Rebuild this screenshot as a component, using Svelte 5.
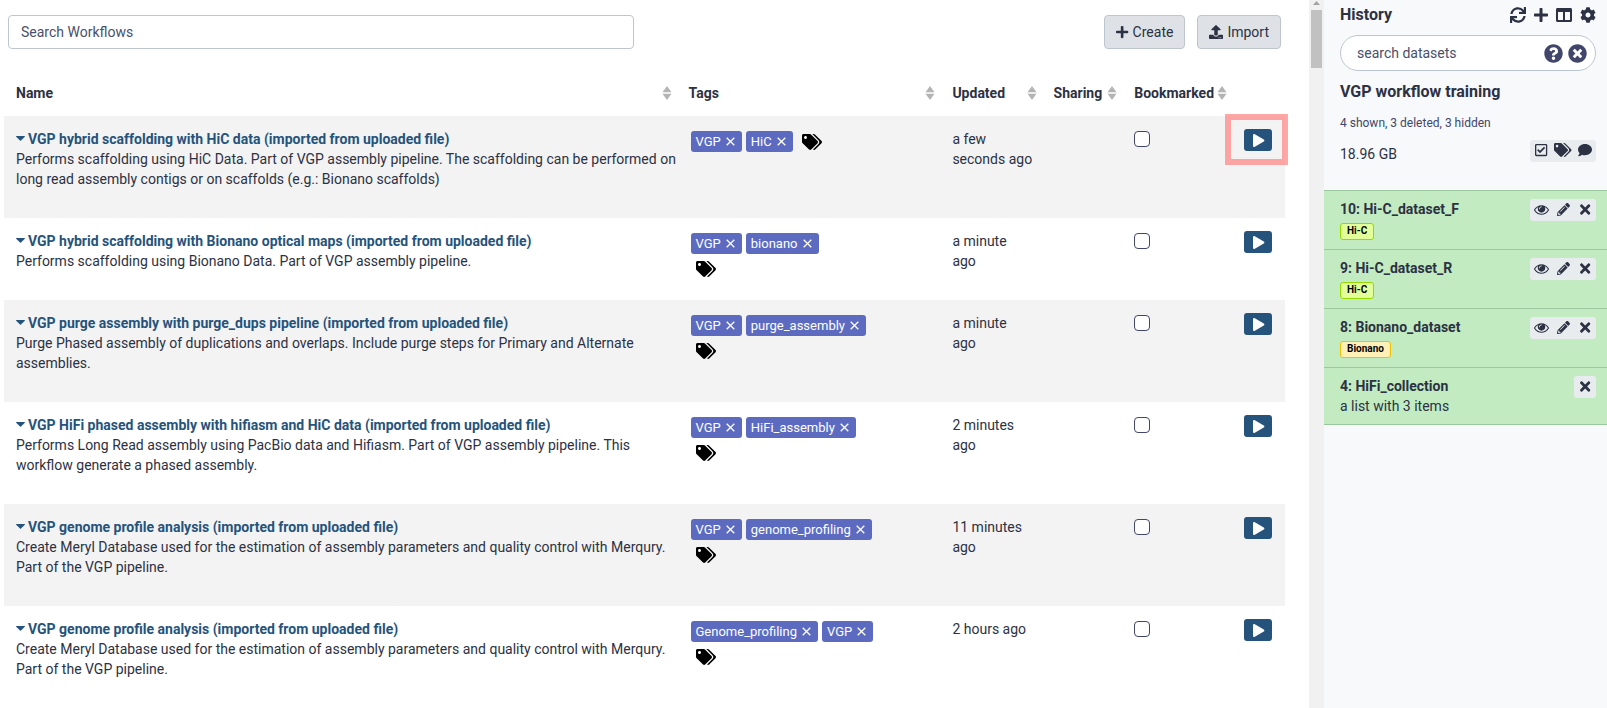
<script>
  const icons = {
    plus: [448, 512, 'M416 208H272V64c0-17.67-14.33-32-32-32h-32c-17.67 0-32 14.33-32 32v144H32c-17.67 0-32 14.33-32 32v32c0 17.67 14.33 32 32 32h144v144c0 17.67 14.33 32 32 32h32c17.67 0 32-14.33 32-32V304h144c17.67 0 32-14.33 32-32v-32c0-17.67-14.33-32-32-32z'],
    upload: [512, 512, 'M296 384h-80c-13.3 0-24-10.7-24-24V192h-87.7c-17.8 0-26.7-21.5-14.1-34.1L242.3 5.7c7.5-7.5 19.8-7.5 27.3 0l152.2 152.2c12.6 12.6 3.7 34.1-14.1 34.1H320v168c0 13.3-10.7 24-24 24zm216-8v112c0 13.3-10.7 24-24 24H24c-13.3 0-24-10.7-24-24V376c0-13.3 10.7-24 24-24h136v8c0 30.9 25.1 56 56 56h80c30.9 0 56-25.1 56-56v-8h136c13.3 0 24 10.7 24 24zm-124 88c0-11-9-20-20-20s-20 9-20 20 9 20 20 20 20-9 20-20zm64 0c0-11-9-20-20-20s-20 9-20 20 9 20 20 20 20-9 20-20z'],
    tags: [640, 512, 'M497.941 225.941L286.059 14.059A48 48 0 0 0 252.118 0H48C21.49 0 0 21.49 0 48v204.118a48 48 0 0 0 14.059 33.941l211.882 211.882c18.744 18.745 49.136 18.746 67.882 0l204.118-204.118c18.745-18.745 18.745-49.137 0-67.882zM112 160c-26.51 0-48-21.49-48-48s21.49-48 48-48 48 21.49 48 48-21.49 48-48 48zm513.941 133.823L421.823 497.941c-18.745 18.745-49.137 18.745-67.882 0l-.36-.36L527.64 323.522c16.999-16.999 26.36-39.6 26.36-63.64s-9.362-46.641-26.36-63.64L331.397 0h48.721a48 48 0 0 1 33.941 14.059l211.882 211.882c18.745 18.745 18.745 49.137 0 67.882z'],
    sync: [512, 512, 'M440.65 12.57l4 82.77A247.16 247.16 0 0 0 255.83 8C134.73 8 33.91 94.92 12.29 209.82A12 12 0 0 0 24.09 224h49.05a12 12 0 0 0 11.67-9.26 175.91 175.91 0 0 1 317-56.94l-101.46-4.86a12 12 0 0 0-12.57 12v47.41a12 12 0 0 0 12 12H500a12 12 0 0 0 12-12V12a12 12 0 0 0-12-12h-47.37a12 12 0 0 0-11.98 12.57zM255.83 432a175.61 175.61 0 0 1-146-77.8l101.8 4.87a12 12 0 0 0 12.57-12v-47.4a12 12 0 0 0-12-12H12a12 12 0 0 0-12 12V500a12 12 0 0 0 12 12h47.35a12 12 0 0 0 12-12.6l-4.15-82.57A247.17 247.17 0 0 0 255.83 504c121.11 0 221.93-86.92 243.55-201.82a12 12 0 0 0-11.8-14.18h-49.05a12 12 0 0 0-11.67 9.26A175.86 175.86 0 0 1 255.83 432z'],
    columns: [512, 512, 'M464 32H48C21.49 32 0 53.49 0 80v352c0 26.51 21.49 48 48 48h416c26.51 0 48-21.49 48-48V80c0-26.51-21.49-48-48-48zM224 416H64V160h160v256zm224 0H288V160h160v256z'],
    cog: [512, 512, 'M487.4 315.7l-42.6-24.6c4.3-23.2 4.3-47 0-70.2l42.6-24.6c4.9-2.8 7.1-8.6 5.5-14-11.1-35.6-30-67.8-54.7-94.6-3.8-4.1-10-5.1-14.8-2.3L380.8 110c-17.9-15.4-38.5-27.3-60.8-35.1V25.8c0-5.6-3.9-10.5-9.4-11.7-36.7-8.2-74.3-7.8-109.2 0-5.5 1.2-9.4 6.1-9.4 11.7V75c-22.2 7.9-42.8 19.8-60.8 35.1L88.7 85.5c-4.9-2.8-11-1.9-14.8 2.3-24.7 26.7-43.6 58.9-54.7 94.6-1.7 5.4.6 11.2 5.5 14L67.3 221c-4.3 23.2-4.3 47 0 70.2l-42.6 24.6c-4.9 2.8-7.1 8.6-5.5 14 11.1 35.6 30 67.8 54.7 94.6 3.8 4.1 10 5.1 14.8 2.3l42.6-24.6c17.9 15.4 38.5 27.3 60.8 35.1v49.2c0 5.6 3.9 10.5 9.4 11.7 36.7 8.2 74.3 7.8 109.2 0 5.5-1.2 9.4-6.1 9.4-11.7v-49.2c22.2-7.9 42.8-19.8 60.8-35.1l42.6 24.6c4.9 2.8 11 1.9 14.8-2.3 24.7-26.7 43.6-58.9 54.7-94.6 1.5-5.5-.7-11.3-5.6-14.1zM256 336c-44.1 0-80-35.9-80-80s35.9-80 80-80 80 35.9 80 80-35.9 80-80 80z'],
    help: [512, 512, 'M504 256c0 136.997-111.043 248-248 248S8 392.997 8 256C8 119.083 119.043 8 256 8s248 111.083 248 248zM262.655 90c-54.497 0-89.255 22.957-116.549 63.758-3.536 5.286-2.353 12.415 2.715 16.258l34.699 26.31c5.205 3.947 12.621 3.008 16.665-2.122 17.864-22.658 30.113-35.797 57.303-35.797 20.429 0 45.698 13.148 45.698 32.958 0 14.976-12.363 22.667-32.534 33.976C247.128 238.528 216 254.941 216 296v4c0 6.627 5.373 12 12 12h56c6.627 0 12-5.373 12-12v-1.333c0-28.462 83.186-29.647 83.186-106.667 0-58.002-60.165-102-116.531-102zM256 338c-25.365 0-46 20.635-46 46 0 25.364 20.635 46 46 46s46-20.636 46-46c0-25.365-20.635-46-46-46z'],
    clear: [512, 512, 'M256 8C119 8 8 119 8 256s111 248 248 248 248-111 248-248S393 8 256 8zm121.6 313.1c4.7 4.7 4.7 12.3 0 17L338 377.6c-4.7 4.7-12.3 4.7-17 0L256 312l-65.1 65.6c-4.7 4.7-12.3 4.7-17 0L134.4 338c-4.7-4.7-4.7-12.3 0-17l65.6-65-65.6-65.1c-4.7-4.7-4.7-12.3 0-17l39.6-39.6c4.7-4.7 12.3-4.7 17 0l65 65.7 65.1-65.6c4.7-4.7 12.3-4.7 17 0l39.6 39.6c4.7 4.7 4.7 12.3 0 17L312 256l65.6 65.1z'],
    comment: [512, 512, 'M256 32C114.6 32 0 125.1 0 240c0 49.6 21.4 95 57 130.7C44.5 421.1 2.7 466 2.2 466.5c-2.2 2.3-2.8 5.7-1.5 8.7S4.8 480 8 480c66.3 0 116-31.8 140.6-51.4 32.7 12.3 69 19.4 107.4 19.4 141.4 0 256-93.1 256-208S397.4 32 256 32z'],
    check: [448, 512, 'M400 32H48C21.49 32 0 53.49 0 80v352c0 26.51 21.49 48 48 48h352c26.51 0 48-21.49 48-48V80c0-26.51-21.49-48-48-48zm0 400H48V80h352v352zM364.1 191.5L191 363c-5 5-13 5-17.5 0L84 273c-5-5-5-12 0-17l28-28c5-5 12-5 17 0l53.5 54 136-135c5-5 12-5 17 0l28.6 28c5 5 5 12 0 17z'],
    eye: [1792, 1792, 'M1664 960q-152-236-381-353 61 104 61 225 0 185-131.5 316.5t-316.5 131.5-316.5-131.5-131.5-316.5q0-121 61-225-229 117-381 353 133 205 333.5 326.5t434.5 121.5 434.5-121.5 333.5-326.5zm-720-384q0-20-14-34t-34-14q-125 0-214.5 89.5t-89.5 214.5q0 20 14 34t34 14 34-14 14-34q0-86 61-147t147-61q20 0 34-14t14-34zm848 384q0 34-20 69-140 230-376.5 368.5t-499.5 138.5-499.5-139-376.5-368q-20-35-20-69t20-69q140-229 376.5-368t499.5-139 499.5 139 376.5 368q20 35 20 69z'],
    pencil: [512, 512, 'M497.9 142.1l-46.1 46.1c-4.7 4.7-12.3 4.7-17 0l-111-111c-4.7-4.7-4.7-12.3 0-17l46.1-46.1c18.7-18.7 49.1-18.7 67.9 0l60.1 60.1c18.8 18.7 18.8 49.1 0 67.9zM284.2 99.8L21.6 362.4.4 483.9c-2.9 16.4 11.4 30.6 27.8 27.8l121.5-21.3 262.6-262.6c4.7-4.7 4.7-12.3 0-17l-111-111c-4.8-4.7-12.4-4.7-17.1 0zM124.1 339.9c-5.5-5.5-5.5-14.3 0-19.8l154-154c5.5-5.5 14.3-5.5 19.8 0s5.5 14.3 0 19.8l-154 154c-5.5 5.5-14.3 5.5-19.8 0zM88 424h48v36.3l-64.5 11.3-31.1-31.1L51.7 376H88v48z'],
    times: [352, 512, 'M242.72 256l100.07-100.07c12.28-12.28 12.28-32.19 0-44.48l-22.24-22.24c-12.28-12.28-32.19-12.28-44.48 0L176 189.28 75.93 89.21c-12.28-12.28-32.19-12.28-44.48 0L9.21 111.45c-12.28 12.28-12.28 32.19 0 44.48L109.28 256 9.21 356.07c-12.28 12.28-12.28 32.19 0 44.48l22.24 22.24c12.28 12.28 32.2 12.28 44.48 0L176 322.72l100.07 100.07c12.28 12.28 32.2 12.28 44.48 0l22.24-22.24c12.28-12.28 12.28-32.19 0-44.48L242.72 256z'],
    play: [448, 512, 'M424.4 214.7L72.4 6.6C43.8-10.3 0 6.1 0 47.9V464c0 37.5 40.7 60.1 72.4 41.3l352-208c31.4-18.5 31.5-64.1 0-82.6z']
  };

  const headings = ['Name', 'Tags', 'Updated', 'Sharing', 'Bookmarked'];

  const workflows = [
    { name: 'VGP hybrid scaffolding with HiC data (imported from uploaded file)', text: 'Performs scaffolding using HiC Data. Part of VGP assembly pipeline. The scaffolding can be performed on long read assembly contigs or on scaffolds (e.g.: Bionano scaffolds)', tags: ['VGP', 'HiC'], updated: 'a few\nseconds ago', marked: true },
    { name: 'VGP hybrid scaffolding with Bionano optical maps (imported from uploaded file)', text: 'Performs scaffolding using Bionano Data. Part of VGP assembly pipeline.', tags: ['VGP', 'bionano'], updated: 'a minute\nago' },
    { name: 'VGP purge assembly with purge_dups pipeline (imported from uploaded file)', text: 'Purge Phased assembly of duplications and overlaps. Include purge steps for Primary and Alternate assemblies.', tags: ['VGP', 'purge_assembly'], updated: 'a minute\nago' },
    { name: 'VGP HiFi phased assembly with hifiasm and HiC data (imported from uploaded file)', text: 'Performs Long Read assembly using PacBio data and Hifiasm. Part of VGP assembly pipeline. This workflow generate a phased assembly.', tags: ['VGP', 'HiFi_assembly'], updated: '2 minutes\nago' },
    { name: 'VGP genome profile analysis (imported from uploaded file)', text: 'Create Meryl Database used for the estimation of assembly parameters and quality control with Merqury. Part of the VGP pipeline.', tags: ['VGP', 'genome_profiling'], updated: '11 minutes\nago' },
    { name: 'VGP genome profile analysis (imported from uploaded file)', text: 'Create Meryl Database used for the estimation of assembly parameters and quality control with Merqury. Part of the VGP pipeline.', tags: ['Genome_profiling', 'VGP'], updated: '2 hours ago' }
  ];

  const datasets = [
    { name: '10: Hi-C_dataset_F', tag: 'Hi-C', kind: 'lime' },
    { name: '9: Hi-C_dataset_R', tag: 'Hi-C', kind: 'lime' },
    { name: '8: Bionano_dataset', tag: 'Bionano', kind: 'amber' },
    { name: '4: HiFi_collection', note: 'a list with 3 items' }
  ];
</script>

{#snippet icon(name, size)}
  <svg class="icon {size}" viewBox="0 0 {icons[name][0]} {icons[name][1]}" aria-hidden="true">
    <path d={icons[name][2]} fill="currentColor" fill-rule="evenodd" />
  </svg>
{/snippet}

<div class="page">
  <main class="center">
    <div class="toolbar">
      <input class="search" type="text" placeholder="Search Workflows" aria-label="Search Workflows" />
      <div class="actions">
        <button class="btn" type="button">{@render icon('plus', 's14')}Create</button>
        <button class="btn" type="button">{@render icon('upload', 's14')}Import</button>
      </div>
    </div>

    <table class="workflows">
      <colgroup>
        <col class="c-name" /><col class="c-tags" /><col class="c-updated" /><col class="c-sharing" /><col class="c-bookmarked" /><col />
      </colgroup>
      <thead>
        <tr>
          {#each headings as heading}
            <th scope="col">
              <div class="heading">
                <span>{heading}</span>
                <svg class="sorter" viewBox="0 0 10 14" aria-hidden="true"><path d="M5 0l4.5 6.3h-9zM5 14l4.5-6.3h-9z" fill="#b4b4b4" /></svg>
              </div>
            </th>
          {/each}
          <th></th>
        </tr>
      </thead>
      <tbody>
        {#each workflows as flow}
          <tr>
            <td class="name">
              <a href="#workflow"><svg class="caret" viewBox="0 0 9 5" aria-hidden="true"><path d="M.6 0h7.8q.9 0 .4.7L5 4.6q-.5.5-1 0L.2.7Q-.3 0 .6 0z" fill="currentColor" /></svg>{flow.name}</a>
              <p>{flow.text}</p>
            </td>
            <td>
              <div class="tags">
                {#each flow.tags as tag}
                  <span class="tag">{tag}<button type="button" aria-label="Remove {tag}"><svg viewBox="0 0 9 9" aria-hidden="true"><path d="M.7.7l7.6 7.6M8.3.7L.7 8.3" stroke="currentColor" stroke-width="1.3" /></svg></button></span>
                {/each}
                <button class="add-tag" type="button" aria-label="Add tags">{@render icon('tags', 's16')}</button>
              </div>
            </td>
            <td class="updated">{flow.updated}</td>
            <td></td>
            <td><input class="bookmark" type="checkbox" aria-label="Bookmark {flow.name}" /></td>
            <td>
              <div class="run-box">
                <button class="run" type="button" aria-label="Run workflow">{@render icon('play', 's13')}</button>
                {#if flow.marked}<span class="frame"></span>{/if}
              </div>
            </td>
          </tr>
        {/each}
      </tbody>
    </table>
  </main>

  <div class="scrollbar" aria-hidden="true">
    <svg viewBox="0 0 7 4"><path d="M3.5 0L7 4H0z" fill="#a3a3a3" /></svg>
    <div class="thumb"></div>
  </div>

  <aside class="history">
    <div class="top">
      <div class="head">
        <h2>History</h2>
        <div class="head-icons">
          <button type="button" aria-label="Refresh history">{@render icon('sync', 's16')}</button>
          <button type="button" aria-label="New history">{@render icon('plus', 's16')}</button>
          <button type="button" aria-label="View all histories">{@render icon('columns', 's16')}</button>
          <button type="button" aria-label="History options">{@render icon('cog', 's16')}</button>
        </div>
      </div>
      <div class="find">
        <input type="text" placeholder="search datasets" aria-label="search datasets" />
        <button type="button" aria-label="Search help">{@render icon('help', 's19')}</button>
        <button type="button" aria-label="Clear search">{@render icon('clear', 's19')}</button>
      </div>
      <h2 class="title">VGP workflow training</h2>
      <div class="counts">4 shown, 3 deleted, 3 hidden</div>
      <div class="size">
        <span>18.96 GB</span>
        <div class="group">
          <button type="button" aria-label="Select datasets">{@render icon('check', 's14')}</button>
          <button type="button" aria-label="Edit history tags">{@render icon('tags', 's14')}</button>
          <button type="button" aria-label="Edit history annotation">{@render icon('comment', 's14')}</button>
        </div>
      </div>
    </div>

    {#each datasets as item}
      <div class="dataset">
        <div class="label">
          <strong>{item.name}</strong>
          {#if item.tag}<span class="badge {item.kind}">{item.tag}</span>{/if}
          {#if item.note}<span>{item.note}</span>{/if}
        </div>
        <div class="group">
          {#if item.tag}
            <button type="button" aria-label="View data">{@render icon('eye', 's15')}</button>
            <button type="button" aria-label="Edit attributes">{@render icon('pencil', 's13')}</button>
          {/if}
          <button type="button" aria-label="Delete">{@render icon('times', 's15')}</button>
        </div>
      </div>
    {/each}
  </aside>
</div>

<style>
  :global(body) { margin: 0; background: #fff; }
  .page {
    display: flex;
    height: 100vh;
    overflow: hidden;
    color: #2c3143;
    font: 14px/20px Roboto, "Liberation Sans", sans-serif;
  }
  .page *, .page { box-sizing: border-box; }
  button, input { font: inherit; color: inherit; margin: 0; }
  button { padding: 0; border: 0; background: none; display: flex; align-items: center; justify-content: center; cursor: pointer; }
  .icon { display: block; flex: none; overflow: visible; }
  .s13 { height: 13px; }
  .s14 { height: 14px; }
  .s15 { height: 15px; }
  .s16 { height: 16px; }
  .s19 { height: 19px; }

  .center { flex: 1; min-width: 0; padding: 15px 24px 0 4px; overflow: hidden; }
  .toolbar { display: flex; justify-content: space-between; padding: 0 4px; }
  .search {
    width: 49.2%;
    height: 34px;
    padding: 0 12px;
    border: 1px solid #bdc6d0;
    border-radius: 4px;
    background: #fff;
  }
  input::placeholder { color: #4a4f6a; opacity: 1; }
  .actions { display: flex; gap: 12px; }
  .btn { height: 34px; padding: 0 11px; gap: 4px; border: 1px solid #bdc6d0; border-radius: 4px; background: #dee2e6; }

  .workflows { width: 100%; margin-top: 20px; table-layout: fixed; border-collapse: collapse; }
  .c-name { width: 52.5%; }
  .c-tags { width: 20.6%; }
  .c-updated { width: 7.9%; }
  .c-sharing { width: 6.3%; }
  .c-bookmarked { width: 8.6%; }
  th { padding: 14px 5px 13px 12px; text-align: left; font-weight: 700; }
  .heading { display: flex; align-items: center; justify-content: space-between; }
  .sorter { flex: none; width: 10px; height: 14px; }
  td { padding: 13px 12px 11px; vertical-align: top; }
  td.name, td.updated { padding-right: 0; }
  td.updated { white-space: pre-line; }
  tbody tr:nth-child(odd) { background: #f3f3f3; }
  a { color: #25537b; font-weight: 700; text-decoration: none; }
  .caret { width: 9px; height: 5px; margin-right: 3px; vertical-align: 3px; }
  p { margin: 0 0 18px; }

  .tags { display: flex; flex-wrap: wrap; gap: 4px; padding: 2px 2px 0; }
  .tag { display: flex; align-items: center; height: 21px; padding: 0 7px 0 5px; gap: 5px; border-radius: 3px; background: #5c6bc0; color: #fff; font-size: 13px; }
  .tag svg { width: 9px; height: 9px; }
  .add-tag { flex: 0 0 112px; height: 21px; justify-content: flex-start; padding: 0 5px; color: #000; }

  .bookmark { appearance: none; display: block; width: 16px; height: 16px; margin-top: 2px; border: 1px solid #41466a; border-radius: 4px; background: #fff; }
  .run-box { position: relative; width: 28px; }
  .run { width: 28px; height: 22px; border-radius: 3px; background: #25537b; color: #fff; }
  .frame { position: absolute; inset: -15px -16px -14px -19px; border: 6px solid rgba(255, 130, 130, .7); pointer-events: none; }

  .scrollbar { display: flex; flex-direction: column; align-items: center; flex: 0 0 15px; padding-top: 1px; gap: 5px; background: #f1f1f1; }
  .scrollbar svg { width: 7px; height: 4px; }
  .thumb { width: 11px; height: 58px; background: #c1c1c1; }

  .history { flex: 0 0 283px; background: #f8f9fb; overflow: hidden; }
  .top { padding: 5px 11px 26px 16px; }
  h2 { margin: 0; font-size: 16px; line-height: 20px; font-weight: 700; }
  .head { display: flex; justify-content: space-between; align-items: center; }
  .head-icons { display: flex; gap: 8px; }
  .find { display: flex; align-items: center; gap: 5px; height: 36px; margin-top: 10px; padding: 0 8px 0 16px; border: 1px solid #bdc6d0; border-radius: 18px; background: #fff; color: #41466a; }
  .find input { flex: 1; min-width: 0; padding: 0; border: 0; outline: 0; background: none; }
  .title { margin-top: 11px; }
  .counts { margin-top: 11px; font-size: 12px; color: #41466a; }
  .size { display: flex; justify-content: space-between; margin-top: 7px; }
  .size > span { padding-top: 4px; }
  .group { display: flex; height: 22px; border-radius: 3px; background: #e9ecef; }
  .group button { width: 22px; height: 20px; }

  .dataset { display: flex; justify-content: space-between; padding: 8px 11px 9px 16px; border-top: 1px solid #9cc79f; background: #c2ebc2; }
  .dataset:last-child { padding-bottom: 8px; border-bottom: 1px solid #9cc79f; }
  .label { display: flex; flex-direction: column; align-items: flex-start; }
  .badge { margin-top: 4px; padding: 0 6px 1px; border: 1px solid; border-radius: 3px; color: #000; font-size: 10px; line-height: 14px; font-weight: 700; }
  .lime { border-color: #94d900; background: #e3ff99; }
  .amber { border-color: #f0c000; background: #fff0b8; }
</style>
